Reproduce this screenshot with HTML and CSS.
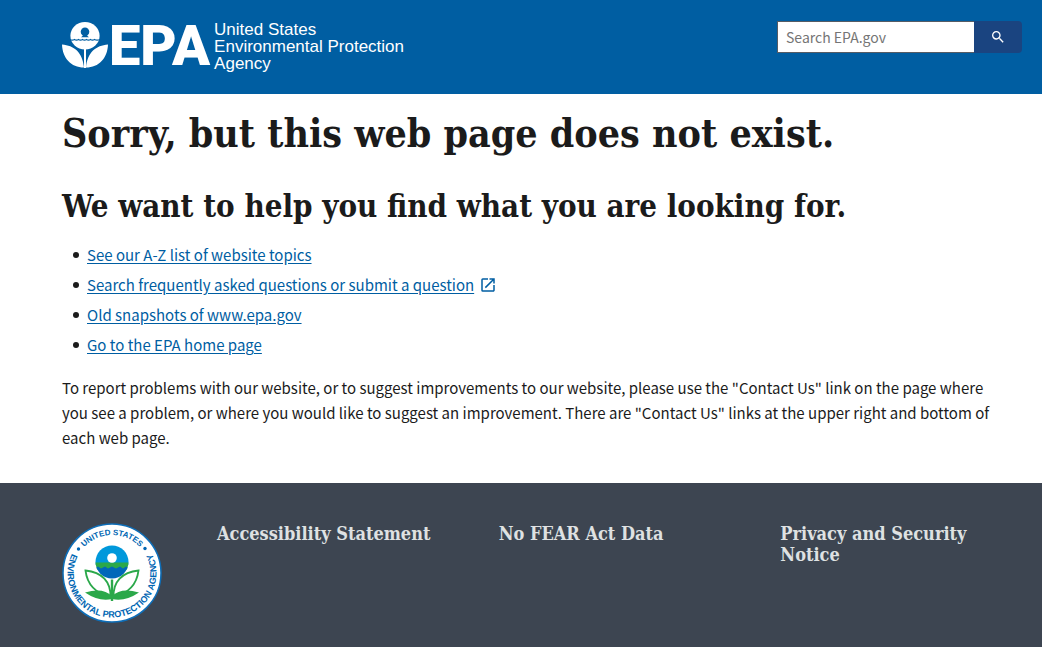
FILE: index.html
```html
<!DOCTYPE html>
<html lang="en">
<head>
<meta charset="utf-8">
<meta name="viewport" content="width=device-width, initial-scale=1">
<title>Page Not Found | US EPA</title>
<link rel="stylesheet" href="styles.css">
</head>
<body>
<header class="site-header">
  <a class="brand" href="#" aria-label="US EPA home">
    <svg class="brand-mark" viewBox="0 0 46 48" aria-hidden="true">
      <ellipse cx="23" cy="14.800" rx="14.600" ry="13.800" fill="#fff"/>
      <circle cx="23" cy="10.800" r="4.300" fill="#005ea2"/>
      <path fill="#005ea2" d="M21 14H25Q25.500 15.500 27 16.300H19Q20.500 15.500 21 14Z"/>
      <path fill="none" stroke="#005ea2" stroke-width="1.300" d="M8 18.500Q10 19.800 12.500 18.500Q14.500 19.900 16.500 18.500Q18.500 19.900 20.500 18.500Q22.500 19.900 24.500 18.500Q26.500 19.900 28.500 18.500Q30.500 19.900 32.500 18.500Q35 19.900 38 18.500"/>
      <path fill="#fff" d="M22 28H24V47H22Z"/>
      <path fill="#fff" d="M0 23.500C12 24.500 20.500 31 22 46.500C9 46.500 .5 37 0 23.500ZM46 23.500C34 24.500 25.500 31 24 46.500C37 46.500 45.500 37 46 23.500Z"/>
    </svg>
    <span class="brand-letters">EPA</span>
    <span class="brand-name">United States<br>Environmental Protection<br>Agency</span>
  </a>
  <form class="search" role="search">
    <input class="search-input" type="search" placeholder="Search EPA.gov" aria-label="Search EPA.gov">
    <button class="search-button" type="submit" aria-label="Search">
      <svg class="search-icon" viewBox="0 0 24 24" aria-hidden="true"><path fill="#fff" d="M15.500 14h-.79l-.28-.27A6.471 6.471 0 0 0 16 9.500 6.500 6.500 0 1 0 9.500 16c1.610 0 3.090-.59 4.230-1.570l.27.28v.79l5 4.990L20.490 19l-4.990-5zm-6 0C7.010 14 5 11.990 5 9.500S7.010 5 9.500 5 14 7.010 14 9.500 11.990 14 9.500 14z"/></svg>
    </button>
  </form>
</header>
<main class="content">
  <h1 class="title">Sorry, but this web page does not exist.</h1>
  <h2 class="subtitle">We want to help you find what you are looking for.</h2>
  <ul class="links">
    <li><a href="#">See our A-Z list of website topics</a></li>
    <li><a href="#">Search frequently asked questions or submit a question</a><svg class="external" viewBox="0 0 24 24" aria-hidden="true"><path fill="#005ea2" d="M19 19H5V5h7V3H5a2 2 0 0 0-2 2v14a2 2 0 0 0 2 2h14c1.100 0 2-.9 2-2v-7h-2v7zM14 3v2h3.590l-9.830 9.830 1.410 1.410L19 6.410V10h2V3h-7z"/></svg></li>
    <li><a href="#">Old snapshots of www.epa.gov</a></li>
    <li><a href="#">Go to the EPA home page</a></li>
  </ul>
  <p class="note">To report problems with our website, or to suggest improvements to our website, please use the "Contact Us" link on the page where you see a problem, or where you would like to suggest an improvement. There are "Contact Us" links at the upper right and bottom of each web page.</p>
</main>
<footer class="site-footer">
  <svg class="seal" viewBox="0 0 100 100" role="img" aria-label="United States Environmental Protection Agency seal">
    <defs>
      <path id="arc-top" d="M12 50A38 38 0 0 1 88 50"/>
      <path id="arc-bottom" d="M50 5.500A44.500 44.500 0 0 0 50 94.500A44.500 44.500 0 0 0 50 5.500"/>
      <clipPath id="globe"><circle cx="50" cy="39" r="16.500"/></clipPath>
    </defs>
    <circle cx="50" cy="50" r="49" fill="#fff" stroke="#0e6eb8" stroke-width="1.500"/>
    <g class="seal-text">
      <text class="seal-text-top" text-anchor="middle"><textPath href="#arc-top" startOffset="50%">UNITED STATES</textPath></text>
      <text text-anchor="middle"><textPath href="#arc-bottom" startOffset="50%">ENVIRONMENTAL PROTECTION AGENCY</textPath></text>
    </g>
    <circle cx="16.500" cy="26" r="1.700" fill="#0066b3"/>
    <circle cx="83" cy="25.500" r="1.700" fill="#0066b3"/>
    <g clip-path="url(#globe)">
      <path fill="#0098db" d="M33 20H67V42H33Z"/>
      <path fill="#2ba84a" d="M33 39.500H67V47H33Z"/>
      <path fill="#0067b9" d="M33 45L36 43.500L39 45.500L43 43.500L46 45.500L50 43.500L54 45.500L58 43.500L61 45.500L64 43.500L67 45V57H33Z"/>
    </g>
    <circle cx="50" cy="35" r="4.800" fill="#fff"/>
    <path fill="#2ba84a" d="M48.800 56.500H51.200V78H48.800Z"/>
    <g fill="#fff" stroke="#2ba84a" stroke-width="1.900">
      <path d="M48.500 74C49 59 40 49 23.500 47.500C25 60 32 70 48.500 74Z"/>
      <path d="M51.500 74C51 59 60 49 76.500 47.500C75 60 68 70 51.500 74Z"/>
    </g>
    <path fill="#2ba84a" d="M23 69.500Q41 64 50 73Q59 64 77 69.500Q63 79 50 76Q37 79 23 69.500Z"/>
  </svg>
  <nav class="footer-links" aria-label="Footer">
    <a href="#">Accessibility Statement</a>
    <a href="#">No FEAR Act Data</a>
    <a href="#">Privacy and Security Notice</a>
  </nav>
</footer>
</body>
</html>
```

FILE: styles.css
```css
* { box-sizing: border-box; }

body {
  display: flex;
  flex-direction: column;
  min-height: 100vh;
  margin: 0;
  background: #fff;
  color: #1b1b1b;
  font: 15px/25px "Noto Sans CJK SC", "Open Sans", sans-serif;
}

.site-header {
  display: flex;
  justify-content: space-between;
  align-items: flex-start;
  padding: 21px 20px 21px 62px;
  background: #005ea2;
}

.brand {
  display: flex;
  align-items: flex-start;
  height: 52px;
  color: #fff;
  text-decoration: none;
}

.brand-mark {
  width: 46px;
  height: 48px;
}

.brand-letters {
  margin: 0 4px 0 1px;
  font: 900 56px/50px Roboto, sans-serif;
}

.brand-name {
  font: 17px/17px "Liberation Sans", sans-serif;
}

.search {
  display: flex;
  width: 245px;
  height: 32px;
}

.search-input {
  flex: 1;
  min-width: 0;
  padding: 0 8px;
  border: 1px solid #565c65;
  border-right: 0;
  border-radius: 0;
  background: #fff;
  font: inherit;
  font-size: 14px;
  appearance: none;
}

.search-input::placeholder { color: #757575; }

.search-button {
  display: flex;
  align-items: center;
  justify-content: center;
  width: 48px;
  padding: 0;
  border: 0;
  border-radius: 0 4px 4px 0;
  background: #1a4480;
}

.search-icon {
  width: 16px;
  height: 16px;
}

.content {
  padding: 13px 38px 33px 62px;
}

.title,
.subtitle,
.footer-links {
  font-family: "DejaVu Serif Condensed", "DejaVu Serif", serif;
  font-weight: bold;
}

.title {
  margin: 0;
  font-size: 39px;
  line-height: 52px;
}

.subtitle {
  margin: 26px 0 13px;
  font-size: 31px;
  line-height: 42px;
}

.links {
  margin: 0;
  padding-left: 11px;
  line-height: 30px;
  list-style: none;
}

.links li {
  display: flex;
  align-items: center;
}

.links li::before {
  content: "";
  width: 6px;
  height: 6px;
  margin-right: 8px;
  border-radius: 50%;
  background: #1b1b1b;
}

.links a {
  color: #005ea2;
  text-underline-offset: 2px;
}

.external {
  width: 18px;
  height: 18px;
  margin-left: 5px;
}

.note {
  margin: 15px 0 0;
}

.site-footer {
  display: flex;
  flex: 1;
  align-items: flex-start;
  gap: 55px;
  padding: 40px 20px 24px 62px;
  background: #3d4551;
}

.seal {
  flex: none;
  width: 100px;
  height: 100px;
}

.seal-text {
  fill: #0066b3;
  font: bold 9px "Liberation Sans", sans-serif;
}

.seal-text-top {
  font-size: 8px;
}

.footer-links {
  display: grid;
  flex: 1;
  grid-template-columns: repeat(3, 1fr);
  gap: 40px;
  font-size: 18px;
  line-height: 21px;
}

.footer-links a {
  color: #dfe1e2;
  text-decoration: none;
}
```
